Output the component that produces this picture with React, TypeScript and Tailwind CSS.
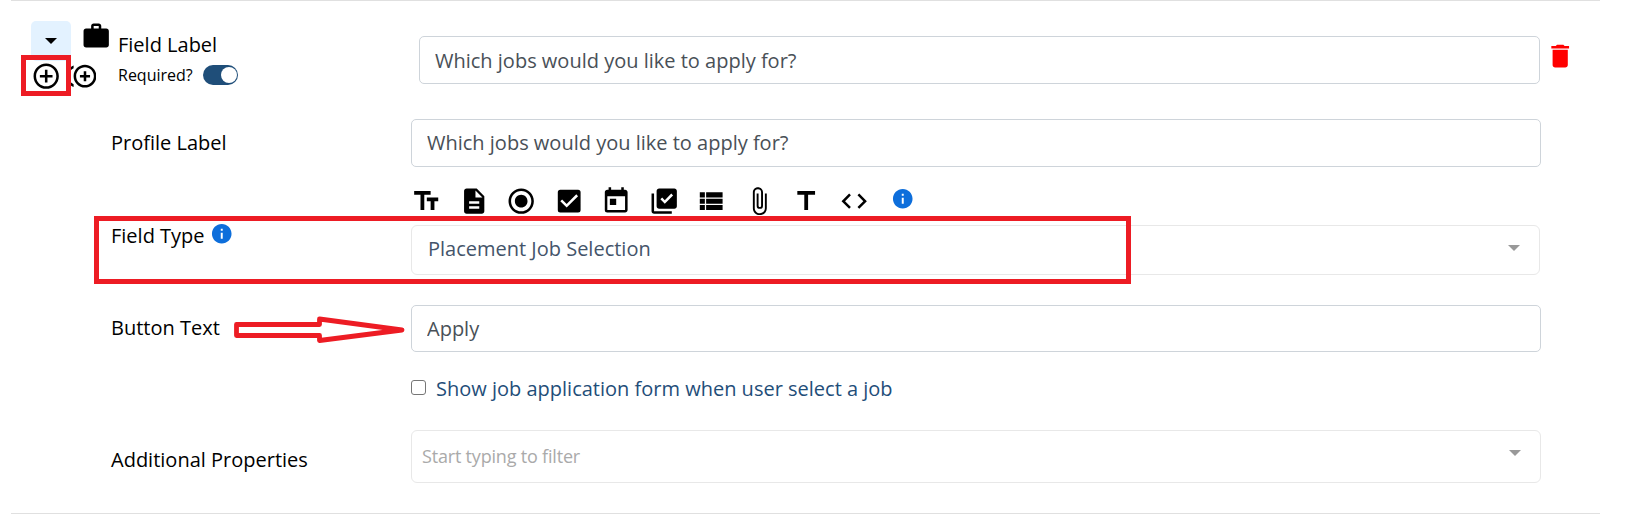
import React from 'react';
import {
  MdAddCircleOutline,
  MdAttachFile,
  MdCheckBox,
  MdCode,
  MdControlPointDuplicate,
  MdDelete,
  MdDescription,
  MdInfo,
  MdLibraryAddCheck,
  MdRadioButtonChecked,
  MdTextFields,
  MdTitle,
  MdToday,
  MdViewList,
  MdWork,
} from 'react-icons/md';
import { clsx } from 'clsx';

const ICON_SIZE = 30.4;

const fieldTypeIcons = [
  MdTextFields,
  MdDescription,
  MdRadioButtonChecked,
  MdCheckBox,
  MdToday,
  MdLibraryAddCheck,
  MdViewList,
  MdAttachFile,
  MdTitle,
  MdCode,
];

function Caret({ className }: { className?: string }) {
  return (
    <svg width="12" height="6" viewBox="0 0 12 6" className={clsx('shrink-0', className)}>
      <path d="M0 0h12L6 6z" fill="currentColor" />
    </svg>
  );
}

function TextInput({ value, className }: { value: string; className?: string }) {
  return (
    <input
      type="text"
      defaultValue={value}
      className={clsx(
        'block rounded-[5px] border border-[#ced4da] bg-white px-[15px] text-[20px] text-[#495057] outline-none',
        className
      )}
    />
  );
}

function Label({ children, className }: { children: React.ReactNode; className?: string }) {
  return (
    <div className={clsx('flex w-[300px] shrink-0 items-center gap-[5px] leading-[28px]', className)}>
      {children}
    </div>
  );
}

export default function App() {
  return (
    <div className="relative h-[528px] w-[1651px] overflow-hidden bg-white font-['Open_Sans','Noto_Sans',sans-serif] text-[20px] text-black">
      <div className="ml-[11px] h-[514px] w-[1589px] border-y border-[#e0e0e0]">
        {/* Field header */}
        <div className="flex h-[118px]">
          <div className="flex w-[107px] shrink-0 flex-col pl-[20px] pt-[20px]">
            <div className="flex h-[40px]">
              <button className="flex h-[40px] w-[40px] shrink-0 justify-center rounded-[5px] bg-[#e3f2ff] pt-[17px]">
                <Caret />
              </button>
              <MdWork size={ICON_SIZE} className="ml-[10px] shrink-0" />
            </div>
            <div className="flex">
              <MdAddCircleOutline size={ICON_SIZE} className="shrink-0" />
              <MdControlPointDuplicate size={ICON_SIZE} className="ml-[4.6px] shrink-0" />
            </div>
          </div>

          <div className="w-[301px] shrink-0 pt-[30px]">
            <div className="leading-[28px]">Field Label</div>
            <div className="mt-[4px] flex items-center gap-[10px] text-[16px] leading-[24px]">
              <span>Required?</span>
              <span className="flex h-[20px] w-[35px] items-center justify-end rounded-full bg-[#1f4e79] pr-[1px]">
                <span className="h-[16px] w-[16px] rounded-full bg-white" />
              </span>
            </div>
          </div>

          <TextInput value="Which jobs would you like to apply for?" className="mt-[35px] h-[48px] w-[1121px]" />
          <MdDelete size={ICON_SIZE} className="ml-[4.6px] mt-[40px] shrink-0 text-[#ff0000]" />
        </div>

        {/* Profile label */}
        <div className="flex h-[67px] pl-[100px]">
          <Label className="mt-[10px] self-start">Profile Label</Label>
          <TextInput value="Which jobs would you like to apply for?" className="h-[48px] w-[1130px] pb-[2px]" />
        </div>

        {/* Field type */}
        <div className="flex h-[119px] pl-[100px]">
          <Label className="mt-[36px] self-start">
            Field Type
            <MdInfo size={23.5} className="-mt-[4px] text-[#0d6edb]" />
          </Label>
          <div className="w-[1129px]">
            <div className="flex h-[39px] items-start gap-[17.15px]">
              {fieldTypeIcons.map((Icon, idx) => (
                <Icon key={idx} size={ICON_SIZE} className="shrink-0" />
              ))}
              <MdInfo size={23.5} className="ml-[4.5px] mt-[1px] shrink-0 text-[#0d6edb]" />
            </div>
            <div className="flex h-[50px] items-center justify-between rounded-[6px] border border-[#e8e8e8] pl-[16px] pr-[19px] text-[#44546a]">
              <span className="-mt-[3px]">Placement Job Selection</span>
              <Caret className="-mt-[4px] text-[#999999]" />
            </div>
          </div>
        </div>

        {/* Button text */}
        <div className="flex h-[125px] pl-[100px]">
          <Label className="mt-[9px] self-start">Button Text</Label>
          <div className="w-[1130px]">
            <TextInput value="Apply" className="h-[47px] w-full pb-[1px]" />
            <label className="mt-[23px] flex items-center gap-[10px] leading-[28px] text-[#1f4e79]">
              <span className="-mt-[3px] h-[15px] w-[15px] rounded-[3px] border border-[#767676] bg-white" />
              Show job application form when user select a job
            </label>
          </div>
        </div>

        {/* Additional properties */}
        <div className="flex pl-[100px]">
          <Label className="mt-[16px] self-start">Additional Properties</Label>
          <div className="flex h-[53px] w-[1130px] items-center justify-between rounded-[6px] border border-[#e8e8e8] pl-[10px] pr-[19px]">
            <span className="-mt-[1px] text-[18px] tracking-[-0.19px] text-[#aaaaaa]">Start typing to filter</span>
            <Caret className="-mt-[8px] text-[#999999]" />
          </div>
        </div>
      </div>

      {/* Callouts */}
      <div className="absolute left-[21px] top-[55px] h-[41px] w-[50px] border-[5px] border-[#ed1c24]" />
      <div className="absolute left-[94px] top-[216px] h-[68px] w-[1037px] border-[5px] border-[#ed1c24]" />
      <svg className="absolute left-[230px] top-[312px]" width="180" height="36" viewBox="230 312 180 36">
        <path
          d="M236.5 324.5H319.5V319L402 330L319.5 340.5V335.5H236.5Z"
          fill="none"
          stroke="#ed1c24"
          strokeWidth="4.8"
          strokeLinejoin="round"
        />
      </svg>
    </div>
  );
}
